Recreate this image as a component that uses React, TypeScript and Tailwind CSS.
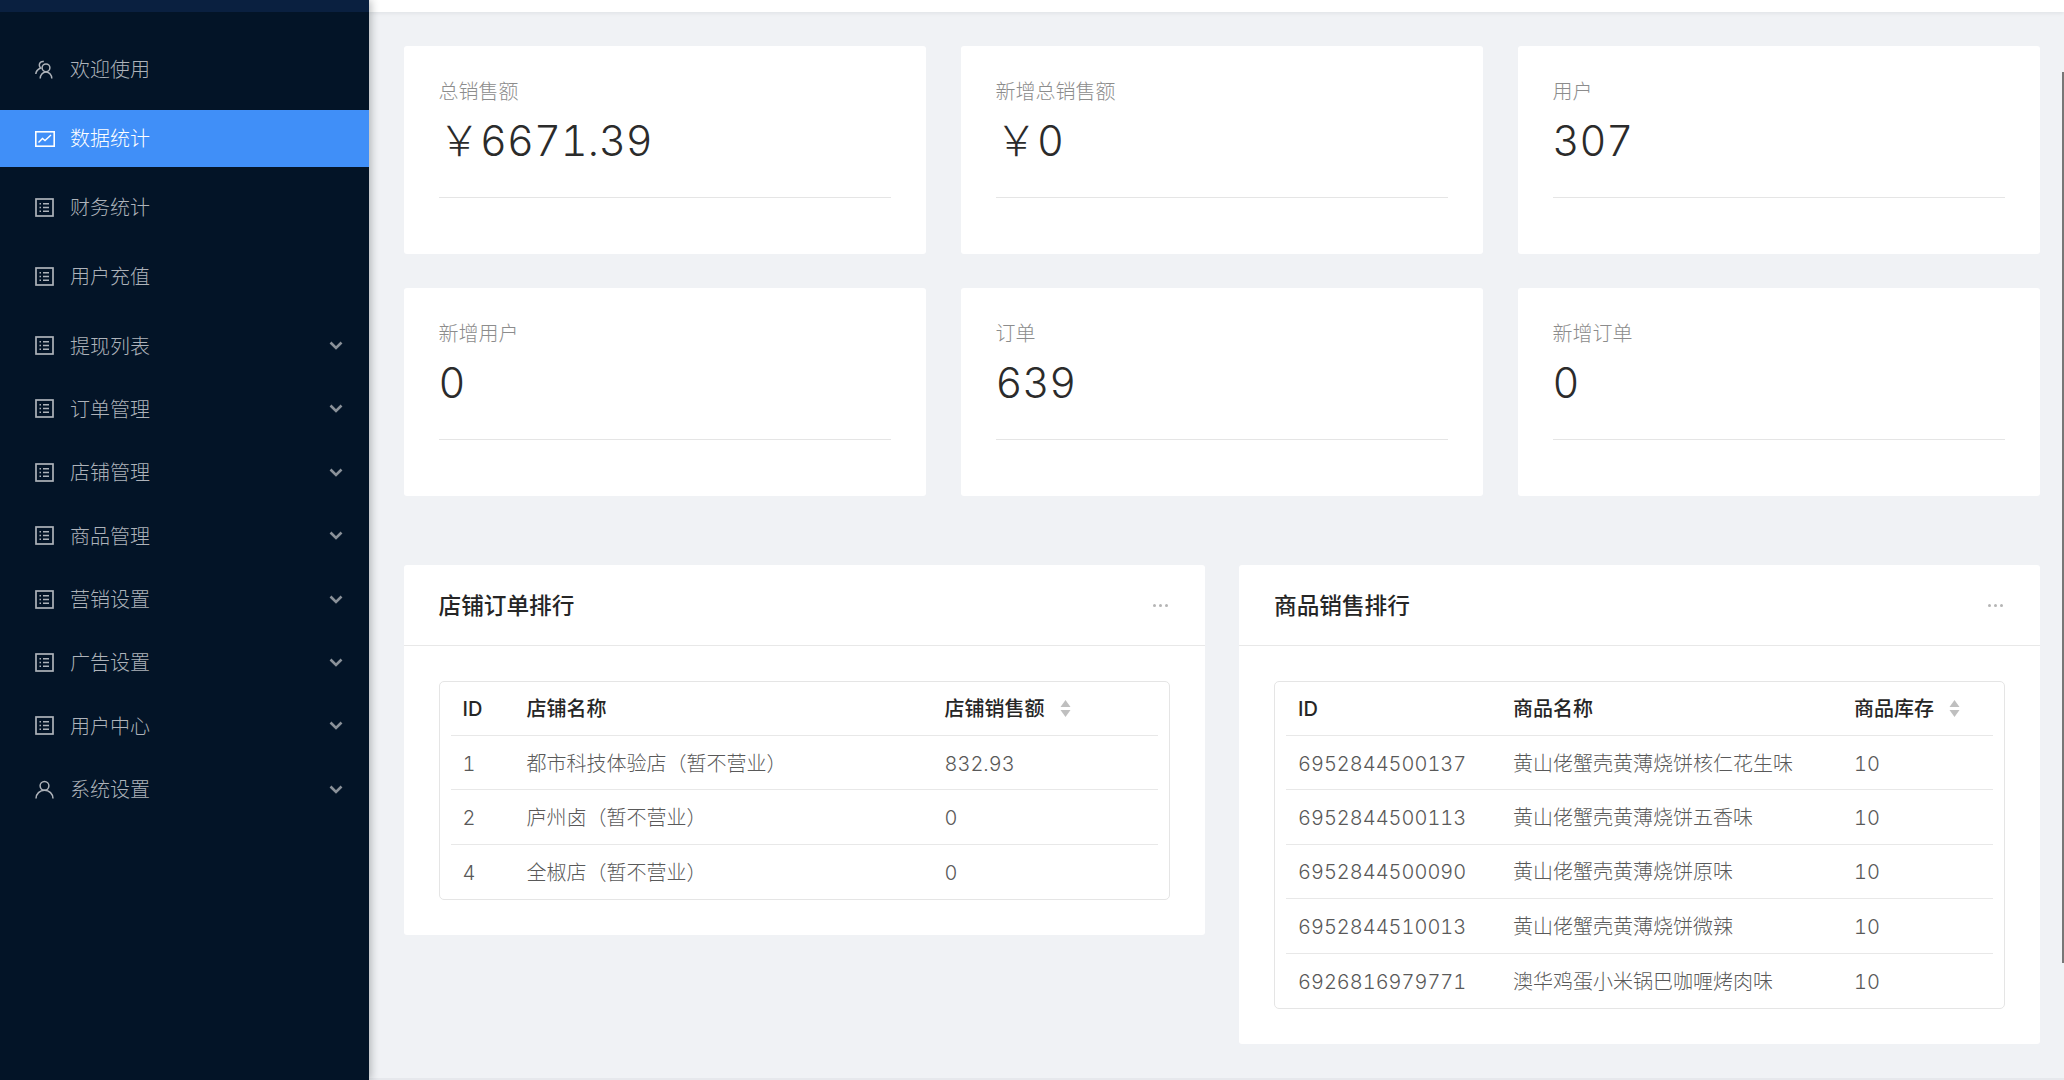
import React from "react";

const font = { fontFamily: '"Inter", "Noto Sans CJK SC", sans-serif' };

function ProfileIcon() {
  return (
    <svg width="19" height="19" viewBox="0 0 19 19" fill="none" stroke="currentColor">
      <rect x="1" y="1" width="17" height="17" strokeWidth="1.7" />
      <path d="M8 5.75h6M8 9.5h6M8 13.25h6" strokeWidth="1.3" />
      <path d="M4.5 5.75h1.5M4.5 9.5h1.5M4.5 13.25h1.5" strokeWidth="1.5" />
    </svg>
  );
}
function FundIcon() {
  return (
    <svg width="20" height="16" viewBox="0 0 20 16" fill="none" stroke="currentColor">
      <rect x="0.8" y="0.8" width="18.4" height="14.4" strokeWidth="1.6" />
      <path d="M3.5 11.5 7.5 7.5 10 9.5 16 4" strokeWidth="1.4" />
    </svg>
  );
}
function TeamIcon() {
  return (
    <svg width="19" height="19" viewBox="0 0 19 19" fill="none" stroke="currentColor" strokeWidth="1.5">
      <circle cx="11" cy="7.8" r="3.9" />
      <path d="M5.2 18.5c0-3.6 2.5-6.4 5.8-6.4s5.8 2.8 5.8 6.4" />
      <path d="M8.8 1.6A3.6 3.6 0 0 0 4.3 5c0 1.3.5 2.3 1.4 3C3 9.2 1 11.2 0.8 14" />
    </svg>
  );
}
function UserIcon() {
  return (
    <svg width="19" height="19" viewBox="0 0 19 19" fill="none" stroke="currentColor" strokeWidth="1.5">
      <circle cx="9.5" cy="5.8" r="4.4" />
      <path d="M1 18.5c0-4.6 3.8-8.3 8.5-8.3s8.5 3.7 8.5 8.3" />
    </svg>
  );
}
function Chevron() {
  return (
    <svg width="14" height="9" viewBox="0 0 14 9" fill="none" stroke="#8a9199" strokeWidth="2.6">
      <path d="M1.5 1.5 7 7l5.5-5.5" />
    </svg>
  );
}
function Sorter() {
  return (
    <svg width="11" height="17" viewBox="0 0 11 17" fill="#bfbfbf" className="ml-[15px]">
      <path d="M5.5 0 10.5 7H0.5Z" />
      <path d="M5.5 17 10.5 10H0.5Z" />
    </svg>
  );
}

type Item = { label: string; icon: React.ReactNode; active?: boolean; sub?: boolean };

const items: Item[] = [
  { label: "欢迎使用", icon: <TeamIcon /> },
  { label: "数据统计", icon: <FundIcon />, active: true },
  { label: "财务统计", icon: <ProfileIcon /> },
  { label: "用户充值", icon: <ProfileIcon /> },
  { label: "提现列表", icon: <ProfileIcon />, sub: true },
  { label: "订单管理", icon: <ProfileIcon />, sub: true },
  { label: "店铺管理", icon: <ProfileIcon />, sub: true },
  { label: "商品管理", icon: <ProfileIcon />, sub: true },
  { label: "营销设置", icon: <ProfileIcon />, sub: true },
  { label: "广告设置", icon: <ProfileIcon />, sub: true },
  { label: "用户中心", icon: <ProfileIcon />, sub: true },
  { label: "系统设置", icon: <UserIcon />, sub: true },
];

const stats = [
  ["总销售额", "￥6671.39"],
  ["新增总销售额", "￥0"],
  ["用户", "307"],
  ["新增用户", "0"],
  ["订单", "639"],
  ["新增订单", "0"],
];

function Sidebar() {
  return (
    <aside className="w-[369px] h-full shrink-0 bg-[#031427] shadow-[2px_0_8px_rgba(29,35,41,0.3)] z-10 flex flex-col">
      <div className="h-[12px] bg-[#0a2040] shrink-0" />
      <nav className="pt-[29px] flex flex-col">
        {items.map((it) => (
          <div
            key={it.label}
            className={
              (it.sub ? "h-[57px] mb-[6.4px] " : "h-[57px] mb-[12px] ") +
              (it.active ? "bg-[#408ff8] text-white " : "text-[#aeb3ba] ") +
              "flex items-center pl-[35px] pr-[26px] text-[20px]"
            }
          >
            <span className="w-[35px] flex items-center shrink-0">{it.icon}</span>
            <span className={(it.sub ? "pt-[2px] " : "") + "flex-1 font-light"}>{it.label}</span>
            {it.sub && <Chevron />}
          </div>
        ))}
      </nav>
    </aside>
  );
}

function StatCard({ label, value }: { label: string; value: string }) {
  return (
    <div className="h-[208px] bg-white rounded-[3px] px-[35px] pt-[31px]">
      <div className="text-[20px] leading-[30px] text-[#8c8c8c] font-light">{label}</div>
      <div className="mt-[10px] h-[48px] text-[41.6px] leading-[48px] text-[#2b2b2b] font-light tabular-nums">{value}</div>
      <div className="mt-[32px] h-px bg-[#e5e5e5]" />
    </div>
  );
}

function Rank({
  title,
  columns,
  grid,
  rows,
}: {
  title: string;
  columns: string[];
  grid: string;
  rows: string[][];
}) {
  return (
    <section className="bg-white rounded-[3px] flex-1 self-start">
      <header className="h-[81px] pl-[35px] pr-[37px] pt-[2px] flex items-center justify-between border-b border-[#e8e8e8]">
        <h2 className="text-[22.67px] font-medium text-[#262626]">{title}</h2>
        <span className="flex gap-[3px] mb-[2px]">
          <i className="w-[3px] h-[3px] rounded-full bg-[#b5b5b5]" />
          <i className="w-[3px] h-[3px] rounded-full bg-[#b5b5b5]" />
          <i className="w-[3px] h-[3px] rounded-full bg-[#b5b5b5]" />
        </span>
      </header>
      <div className="px-[35px] pt-[35px] pb-[35px]">
        <div className="border border-[#e5e5e5] rounded-[5px] px-[11px]">
          <div className={grid + " h-[54px] items-center border-b border-[#e8e8e8] text-[20px] font-medium text-[#262626] pl-[12px]"}>
            <div>{columns[0]}</div>
            <div>{columns[1]}</div>
            <div className="flex items-center">
              {columns[2]}
              <Sorter />
            </div>
          </div>
          {rows.map((r, i) => (
            <div
              key={r[0]}
              className={
                grid +
                " h-[54.4px] items-center text-[20px] text-[#595959] font-light tabular-nums pl-[12px] pt-[2px] " +
                (i < rows.length - 1 ? "border-b border-[#e8e8e8]" : "")
              }
            >
              <div>{r[0]}</div>
              <div>{r[1]}</div>
              <div>{r[2]}</div>
            </div>
          ))}
        </div>
      </div>
    </section>
  );
}

export default function App() {
  return (
    <div className="relative w-full h-screen flex overflow-hidden bg-[#f0f2f5]" style={font}>
      <Sidebar />
      <main className="flex-1 min-w-0 flex flex-col">
        <div className="h-[12px] shrink-0 bg-white shadow-[0_1px_4px_rgba(0,21,41,0.08)]" />
        <div className="pl-[34.5px] pr-[24px] pt-[34px]">
          <div className="grid grid-cols-3 gap-x-[34.5px] gap-y-[34px]">
            {stats.map(([l, v]) => (
              <StatCard key={l} label={l} value={v} />
            ))}
          </div>
          <div className="mt-[69px] flex gap-[34.5px]">
            <Rank
              title="店铺订单排行"
              columns={["ID", "店铺名称", "店铺销售额"]}
              grid="grid grid-cols-[64px_418px_1fr]"
              rows={[
                ["1", "都市科技体验店（暂不营业）", "832.93"],
                ["2", "庐州卤（暂不营业）", "0"],
                ["4", "全椒店（暂不营业）", "0"],
              ]}
            />
            <Rank
              title="商品销售排行"
              columns={["ID", "商品名称", "商品库存"]}
              grid="grid grid-cols-[215px_341px_1fr]"
              rows={[
                ["6952844500137", "黄山佬蟹壳黄薄烧饼核仁花生味", "10"],
                ["6952844500113", "黄山佬蟹壳黄薄烧饼五香味", "10"],
                ["6952844500090", "黄山佬蟹壳黄薄烧饼原味", "10"],
                ["6952844510013", "黄山佬蟹壳黄薄烧饼微辣", "10"],
                ["6926816979771", "澳华鸡蛋小米锅巴咖喱烤肉味", "10"],
              ]}
            />
          </div>
        </div>
      </main>
      <div className="absolute right-0 top-[72px] h-[891px] w-[2px] bg-[#777777]" />
      <div className="absolute left-[369px] right-0 bottom-0 h-[2px] bg-[#e6e8ec]" />
    </div>
  );
}
